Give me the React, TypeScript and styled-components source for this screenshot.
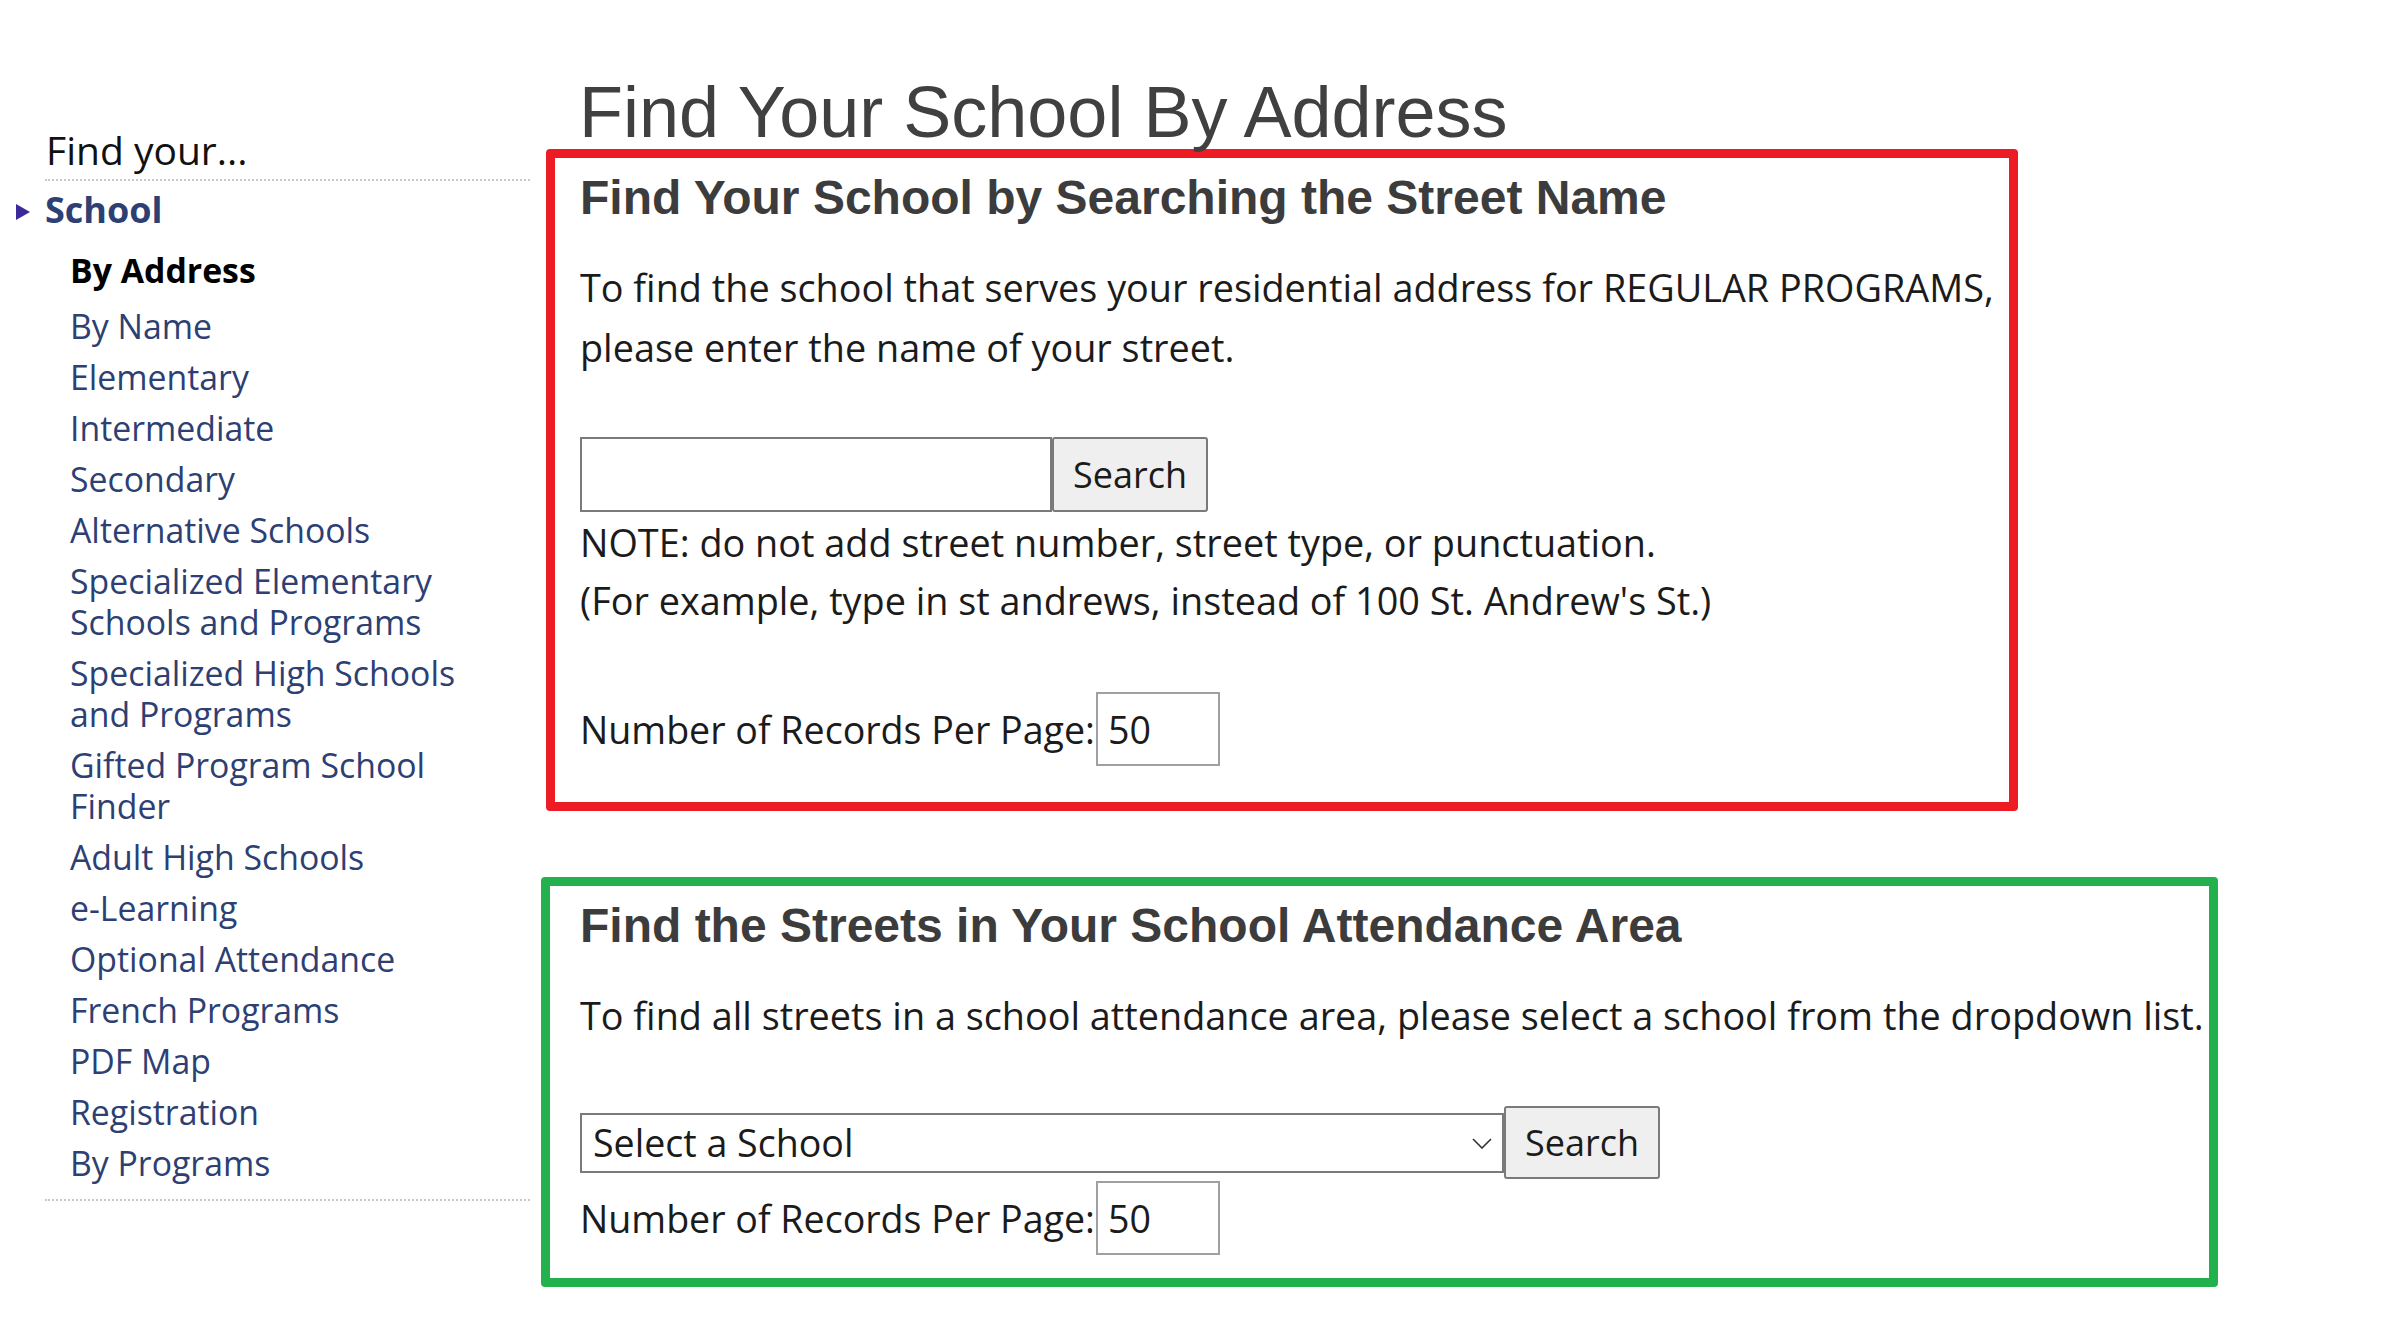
import React from "react";
import styled, { createGlobalStyle } from "styled-components";

const GlobalStyle = createGlobalStyle`
  html, body { margin: 0; padding: 0; background: #ffffff; }
  body { font-family: "Open Sans", "Noto Sans", sans-serif; color: #1b1b1b; }
  * { box-sizing: border-box; }
`;

const Page = styled.div`
  display: flex;
  align-items: flex-start;
  width: 2402px;
  min-height: 1339px;
`;

const Sidebar = styled.nav`
  flex: none;
  width: 485px;
  margin-left: 45px;
  padding-top: 126px;
`;

const SideTitle = styled.div`
  font-size: 39px;
  line-height: 48px;
  color: #111111;
  padding-left: 1px;
  padding-bottom: 5px;
  border-bottom: 2px dotted #c9c9c9;
`;

const SectionRow = styled.div`
  display: flex;
  align-items: center;
  gap: 15px;
  margin-left: -29px;
  margin-top: 7px;
`;

const Arrow = styled.span`
  width: 0;
  height: 0;
  border-left: 14px solid #3d2a9a;
  border-top: 8px solid transparent;
  border-bottom: 8px solid transparent;
  margin-top: 4px;
`;

const SectionLink = styled.a`
  font-size: 36px;
  font-weight: 700;
  line-height: 44px;
  color: #2d3f73;
  text-decoration: none;
`;

const SubList = styled.ul`
  list-style: none;
  margin: 13px 0 0;
  padding: 0 36px 0 25px;
`;

const NavItem = styled.li<{ $active?: boolean }>`
  font-size: 33.8px;
  line-height: 41px;
  padding: 5px 0 ${(p) => (p.$active ? "10px" : "5px")};
  color: ${(p) => (p.$active ? "#000000" : "#2d3f73")};
  font-weight: ${(p) => (p.$active ? 700 : 400)};
`;

const Divider = styled.div`
  margin-top: 10px;
  border-top: 2px dotted #c9c9c9;
`;

const Main = styled.main`
  flex: none;
  margin-left: 11px;
  padding-top: 73px;
`;

const Title = styled.h1`
  margin: 0 0 -2px;
  padding-left: 38px;
  font-family: "Liberation Sans", Arial, sans-serif;
  font-weight: 400;
  font-size: 72px;
  line-height: 78px;
  color: #404040;
`;

const Panel = styled.section<{ $color: string; $width: number; $offset: number; $pad: number; $bottom: number; $top: number }>`
  width: ${(p) => p.$width}px;
  margin-left: ${(p) => p.$offset}px;
  margin-top: ${(p) => p.$top}px;
  border: 9px solid ${(p) => p.$color};
  border-radius: 4px;
  padding: 12px 8px ${(p) => p.$bottom}px ${(p) => p.$pad}px;
`;

const Heading = styled.h2`
  margin: 0;
  font-family: "Liberation Sans", Arial, sans-serif;
  font-weight: 700;
  font-size: 48px;
  line-height: 56px;
  color: #3c3c3c;
`;

const Para = styled.p<{ $nowrap?: boolean }>`
  margin: 32px 0 0;
  font-size: 37.8px;
  line-height: 60px;
  white-space: ${(p) => (p.$nowrap ? "nowrap" : "normal")};
`;

const Row = styled.div<{ $top: number }>`
  display: flex;
  align-items: center;
  margin-top: ${(p) => p.$top}px;
`;

const TextInput = styled.input`
  width: 472px;
  height: 75px;
  border: 2px solid #7a7a7a;
  border-radius: 0;
  padding: 0 10px;
  font-family: inherit;
  font-size: 37.8px;
  background: #fff;
`;

const Button = styled.button<{ $h: number }>`
  width: 156px;
  height: ${(p) => p.$h}px;
  background: #efefef;
  border: 2px solid #7a7a7a;
  border-radius: 3px;
  font-family: inherit;
  font-size: 36px;
  color: #1b1b1b;
  padding: 0;
`;

const Notes = styled.div`
  margin-top: 2px;
  font-size: 37.8px;
  line-height: 58px;
`;

const RecordsRow = styled.div<{ $top: number }>`
  display: flex;
  align-items: baseline;
  margin-top: ${(p) => p.$top}px;
  font-size: 37.6px;
`;

const NumInput = styled.input`
  width: 124px;
  height: 74px;
  margin-left: 1px;
  border: 2px solid #a0a0a0;
  border-radius: 0;
  padding: 0 10px;
  font-family: inherit;
  font-size: 37.6px;
  color: #1b1b1b;
  background: #fff;
`;

const SelectWrap = styled.div`
  position: relative;
  width: 924px;
  height: 60px;
`;

const Select = styled.select`
  width: 100%;
  height: 100%;
  appearance: none;
  -webkit-appearance: none;
  border: 2px solid #7a7a7a;
  border-radius: 0;
  padding: 0 11px;
  font-family: inherit;
  font-size: 37.6px;
  color: #1b1b1b;
  background: #fff;
`;

const Chevron = styled.svg`
  position: absolute;
  right: 12px;
  top: 25px;
  width: 20px;
  height: 11px;
  pointer-events: none;
`;

const navItems = [
  "By Name",
  "Elementary",
  "Intermediate",
  "Secondary",
  "Alternative Schools",
  "Specialized Elementary Schools and Programs",
  "Specialized High Schools and Programs",
  "Gifted Program School Finder",
  "Adult High Schools",
  "e-Learning",
  "Optional Attendance",
  "French Programs",
  "PDF Map",
  "Registration",
  "By Programs",
];

export default function App() {
  return (
    <>
      <GlobalStyle />
      <Page>
        <Sidebar>
          <SideTitle>Find your...</SideTitle>
          <SectionRow>
            <Arrow />
            <SectionLink>School</SectionLink>
          </SectionRow>
          <SubList>
            <NavItem $active>By Address</NavItem>
            {navItems.map((n) => (
              <NavItem key={n}>{n}</NavItem>
            ))}
          </SubList>
          <Divider />
        </Sidebar>
        <Main>
          <Title>Find Your School By Address</Title>
          <Panel $color="#ed1c24" $width={1472} $offset={5} $pad={25} $bottom={36} $top={0}>
            <Heading>Find Your School by Searching the Street Name</Heading>
            <Para>
              To find the school that serves your residential address for REGULAR PROGRAMS, please enter the name of
              your street.
            </Para>
            <Row $top={59}>
              <TextInput type="text" defaultValue="" />
              <Button $h={75}>Search</Button>
            </Row>
            <Notes>
              NOTE: do not add street number, street type, or punctuation.
              <br />
              (For example, type in st andrews, instead of 100 St. Andrew's St.)
            </Notes>
            <RecordsRow $top={62}>
              <span>Number of Records Per Page:</span>
              <NumInput type="text" defaultValue="50" />
            </RecordsRow>
          </Panel>
          <Panel $color="#22b14c" $width={1677} $offset={0} $pad={30} $bottom={23} $top={66}>
            <Heading>Find the Streets in Your School Attendance Area</Heading>
            <Para $nowrap>
              To find all streets in a school attendance area, please select a school from the dropdown list.
            </Para>
            <Row $top={60}>
              <SelectWrap>
                <Select defaultValue="">
                  <option value="">Select a School</option>
                </Select>
                <Chevron viewBox="0 0 20 11">
                  <path d="M1 1 L10 10 L19 1" fill="none" stroke="#333" strokeWidth="1.6" />
                </Chevron>
              </SelectWrap>
              <Button $h={73}>Search</Button>
            </Row>
            <RecordsRow $top={2}>
              <span>Number of Records Per Page:</span>
              <NumInput type="text" defaultValue="50" />
            </RecordsRow>
          </Panel>
        </Main>
      </Page>
    </>
  );
}
